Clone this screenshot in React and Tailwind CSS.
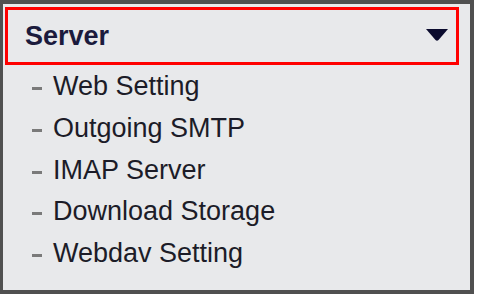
export default function App() {
  const items = ["Web Setting", "Outgoing SMTP", "IMAP Server", "Download Storage", "Webdav Setting"];
  return (
    <div className="w-[477px] h-[295px] bg-white" style={{ fontFamily: '"Liberation Sans", Arial, sans-serif' }}>
      <div className="w-[474px] h-[294px] bg-[#e8e9eb] border-l-[3px] border-t-4 border-r-4 border-b-4 border-[#505050] pt-[3px] pl-[2px] flex flex-col">
        <div className="w-[454px] h-[58px] shrink-0 border-[3px] border-[#ff0000] flex items-start justify-between pl-[17px] pr-[8px]">
          <span className="text-[27px] leading-[27px] font-bold text-[#1b1b3d] mt-[13px]">Server</span>
          <svg width="22" height="12" viewBox="0 0 22 12" className="mt-[19px]">
            <path d="M0 0 H22 L12.5 11 Q11 12.5 9.5 11 Z" fill="#0b0b2e" />
          </svg>
        </div>
        <div className="flex flex-col -ml-[2px]">
          {items.map((t) => (
            <div key={t} className="h-[41.75px] flex items-start pl-[29px]">
              <div className="w-[10px] h-[3px] bg-[#7a7a7a] mt-[22px] shrink-0" />
              <span className="ml-[11px] text-[27px] leading-[43px] text-[#1c1c28] whitespace-nowrap">{t}</span>
            </div>
          ))}
        </div>
      </div>
    </div>
  );
}
